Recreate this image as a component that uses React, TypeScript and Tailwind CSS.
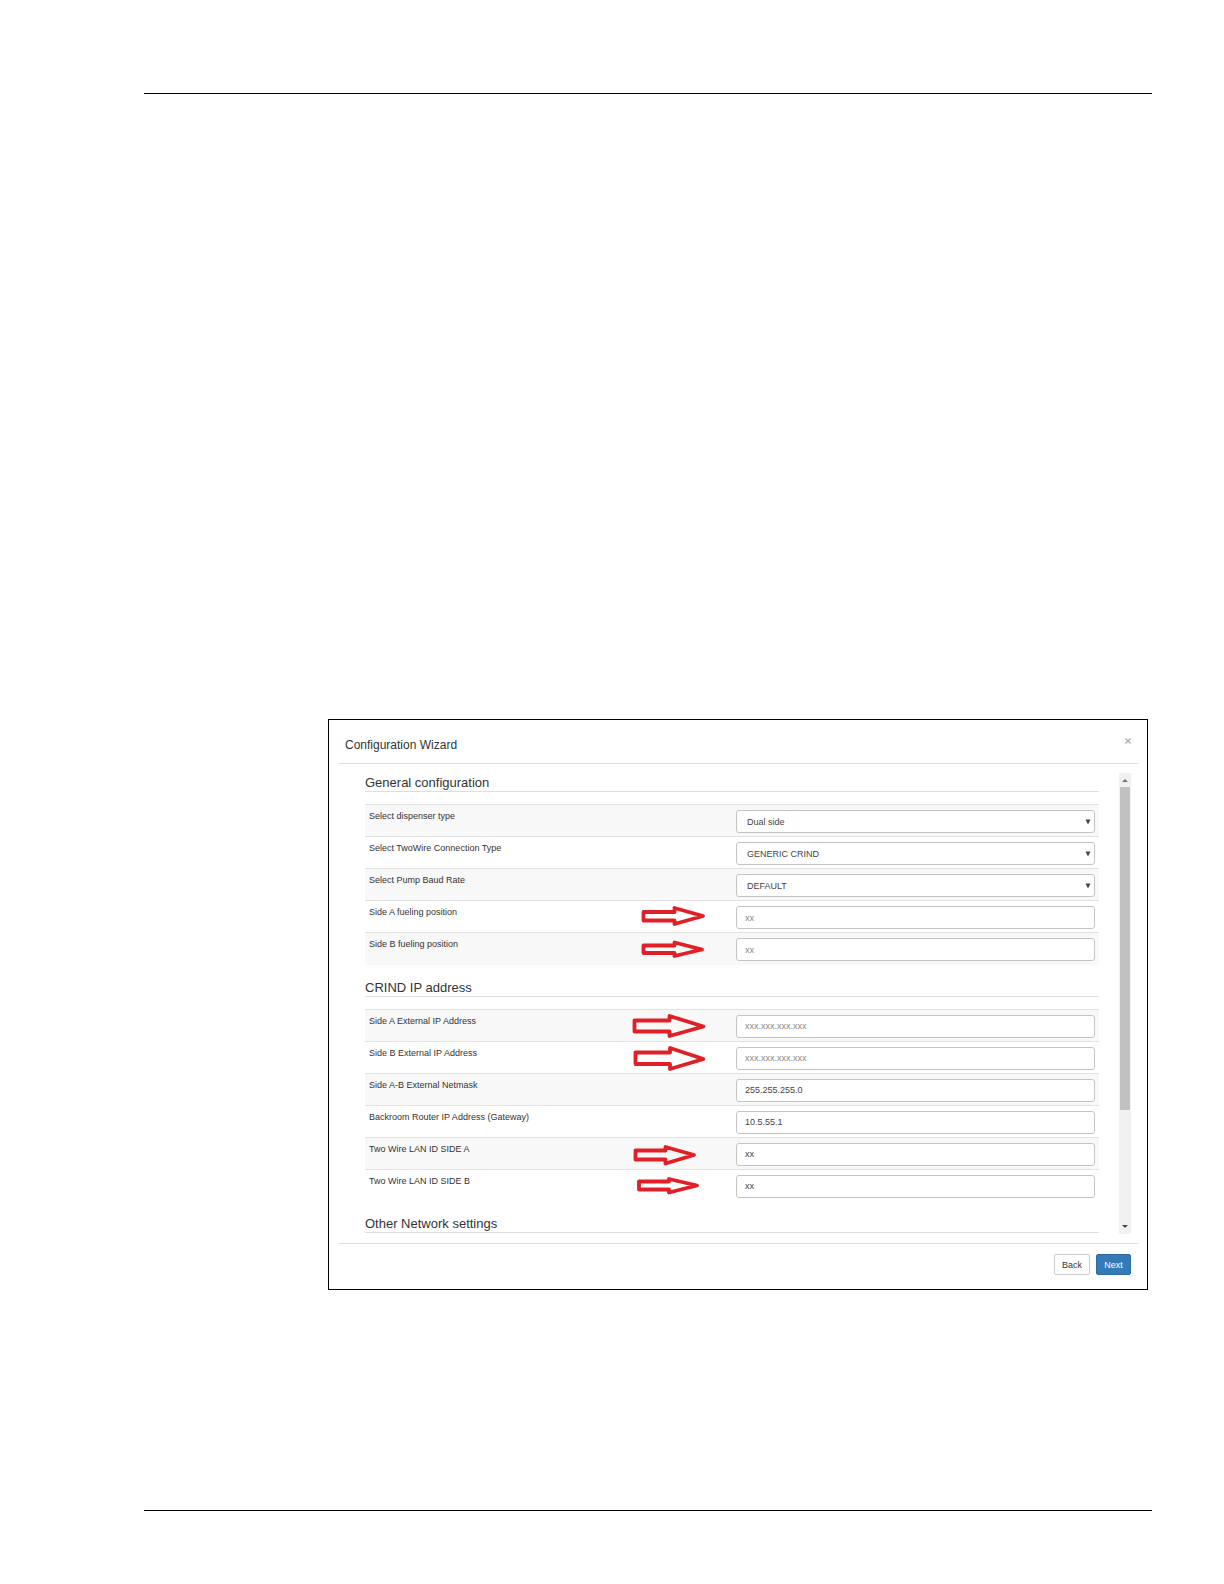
import React from "react";

type Row = {
  id: string;
  label: string;
  kind: "select" | "input";
  value?: string;
  placeholder?: string;
  arrow?: string;
};

const general: Row[] = [
  { id: "dispenser", label: "Select dispenser type", kind: "select", value: "Dual side" },
  { id: "twowire", label: "Select TwoWire Connection Type", kind: "select", value: "GENERIC CRIND" },
  { id: "baud", label: "Select Pump Baud Rate", kind: "select", value: "DEFAULT" },
  { id: "fuel-a", label: "Side A fueling position", kind: "input", placeholder: "xx", arrow: "M11.5 11H42.5V7L71 15L42.5 23V19.5H11.5Z" },
  { id: "fuel-b", label: "Side B fueling position", kind: "input", placeholder: "xx", arrow: "M11.5 12.5H42.5V9.5L70 16.5L42.5 23V20H11.5Z" },
];

const addresses: Row[] = [
  { id: "ip-a", label: "Side A External IP Address", kind: "input", placeholder: "xxx.xxx.xxx.xxx", arrow: "M2.5 10.5H37.5V6L71.5 16.5L37.5 26V21.5H2.5Z" },
  { id: "ip-b", label: "Side B External IP Address", kind: "input", placeholder: "xxx.xxx.xxx.xxx", arrow: "M3.5 10.5H38V6L71.5 17L38 27V22H3.5Z" },
  { id: "netmask", label: "Side A-B External Netmask", kind: "input", value: "255.255.255.0" },
  { id: "gateway", label: "Backroom Router IP Address (Gateway)", kind: "input", value: "10.5.55.1" },
  { id: "lan-a", label: "Two Wire LAN ID SIDE A", kind: "input", value: "xx", arrow: "M3.5 12.5H33.5V9L62 17L33.5 25.5V21.5H3.5Z" },
  { id: "lan-b", label: "Two Wire LAN ID SIDE B", kind: "input", value: "xx", arrow: "M7 11.5H37V9L65 15.5L37 22.5V19.5H7Z" },
];

function Arrow({ d }: { d: string }) {
  return (
    <svg viewBox="0 0 80 32" className="mr-5 h-8 w-20 shrink-0" aria-hidden="true">
      <path d={d} fill="none" stroke="#e01f27" strokeWidth="3.8" strokeLinejoin="round" />
    </svg>
  );
}

function Field({ row }: { row: Row }) {
  const box =
    "block w-full rounded-[3px] border border-[#c4c4c4] bg-white text-[9px] leading-3 text-[#444] outline-none";
  if (row.kind === "select") {
    return (
      <div className="relative">
        <select id={row.id} className={`${box} h-[23px] appearance-none pl-[10px]`} defaultValue={row.value}>
          <option>{row.value}</option>
        </select>
        <svg viewBox="0 0 6 6" className="pointer-events-none absolute top-[9px] right-1 h-1.5 w-1.5" aria-hidden="true">
          <path d="M0.5 0.5H5.5L3 5.5Z" fill="#444" />
        </svg>
      </div>
    );
  }
  return (
    <input
      id={row.id}
      type="text"
      className={`${box} h-[23px] pl-2 placeholder:text-[#888]`}
      defaultValue={row.value}
      placeholder={row.placeholder}
    />
  );
}

function Section({ title, rows }: { title: string; rows: Row[] }) {
  return (
    <section>
      <h2 className="flex h-6 items-end border-b border-[#dedede] text-[13px] leading-4 text-[#333]">{title}</h2>
      {rows.length > 0 && (
        <table className="mt-3 mb-2 w-full table-fixed border-collapse">
          <tbody>
            {rows.map((row) => (
              <tr key={row.id} className="h-8 odd:bg-[#f8f8f8]">
                <td className="border-t border-[#e2e2e2] p-0 align-top">
                  <div className="flex h-[31px] justify-between pl-1">
                    <label htmlFor={row.id} className="pt-[5px] text-[9px] leading-3 text-[#333]">
                      {row.label}
                    </label>
                    {row.arrow && <Arrow d={row.arrow} />}
                  </div>
                </td>
                <td className="border-t border-[#e2e2e2] px-1 pt-[5px] pb-0 align-top">
                  <Field row={row} />
                </td>
              </tr>
            ))}
          </tbody>
        </table>
      )}
    </section>
  );
}

function Scrollbar() {
  return (
    <div className="flex w-3 shrink-0 flex-col bg-[#f1f1f1]" aria-hidden="true">
      <svg viewBox="0 0 12 14" className="h-3.5 w-3">
        <path d="M3 9L6 6L9 9Z" fill="#777" />
      </svg>
      <div className="mx-px h-[323px] bg-[#c1c1c1]" />
      <div className="grow" />
      <svg viewBox="0 0 12 14" className="h-3.5 w-3">
        <path d="M3 5H9L6 8Z" fill="#444" />
      </svg>
    </div>
  );
}

export default function App() {
  return (
    <main className="bg-white pt-[93px] pr-[72px] pb-[73px] pl-36 font-['Liberation_Sans',Arial,sans-serif]">
      <hr className="border-t border-black" />
      <div
        role="dialog"
        aria-labelledby="wizard-title"
        className="mt-[625px] mr-1 ml-[184px] border border-black bg-white px-[9px]"
      >
        <header className="flex h-11 justify-between border-b border-[#dedede] pr-1.5 pl-[7px]">
          <h1 id="wizard-title" className="pt-[17px] text-xs leading-4 text-[#333]">
            Configuration Wizard
          </h1>
          <button type="button" aria-label="Close" className="mt-[17px] h-2 w-2 text-[#aaa]">
            <svg viewBox="0 0 8 8" className="h-2 w-2">
              <path d="M1.5 1.5L6.5 6.5M6.5 1.5L1.5 6.5" stroke="currentColor" strokeWidth="1.3" />
            </svg>
          </button>
        </header>
        <div className="mt-[9px] mb-[9px] flex pr-[7px] pl-[27px]">
          <div className="mr-5 h-[461px] min-w-0 grow overflow-hidden">
            <div className="-mt-[5px]">
              <Section title="General configuration" rows={general} />
              <Section title="CRIND IP address" rows={addresses} />
              <Section title="Other Network settings" rows={[]} />
            </div>
          </div>
          <Scrollbar />
        </div>
        <footer className="flex justify-end gap-1.5 border-t border-[#dedede] pt-2.5 pr-[7px] pb-3.5 text-[9px] leading-3">
          <button type="button" className="h-[21px] w-9 rounded-[2px] border border-[#ccc] bg-white text-[#333]">
            Back
          </button>
          <button type="button" className="h-[21px] w-[35px] rounded-[2px] border border-[#2e6da4] bg-[#337ab7] text-white">
            Next
          </button>
        </footer>
      </div>
      <hr className="mt-[220px] border-t border-black" />
    </main>
  );
}
